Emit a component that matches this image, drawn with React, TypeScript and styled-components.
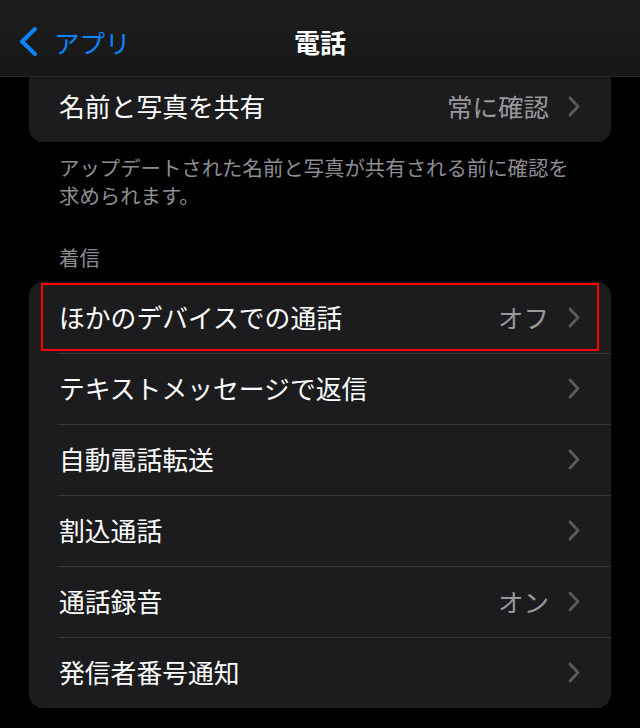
import React from "react";
import styled, { createGlobalStyle } from "styled-components";

const GlobalStyle = createGlobalStyle`
  html, body {
    margin: 0;
    padding: 0;
    background: #000;
  }
  body {
    font-family: "Noto Sans CJK JP", "Noto Sans", sans-serif;
    -webkit-font-smoothing: antialiased;
  }
`;

const Screen = styled.div`
  width: 640px;
  height: 728px;
  overflow: hidden;
  background: #000;
  display: flex;
  flex-direction: column;
`;

const NavBar = styled.div`
  position: relative;
  z-index: 2;
  flex: 0 0 auto;
  height: 77px;
  box-sizing: border-box;
  padding-top: 6px;
  display: flex;
  align-items: center;
  justify-content: center;
  background: linear-gradient(#1d1d1d, #171717);
  border-bottom: 1px solid #262626;
`;

const BackButton = styled.a`
  position: absolute;
  left: 18px;
  top: 6px;
  bottom: 0;
  display: flex;
  align-items: center;
  gap: 16px;
  color: #0a84ff;
  font-size: 25.5px;
  text-decoration: none;
`;

const NavTitle = styled.div`
  color: #fff;
  font-size: 26px;
  font-weight: 700;
`;

const Content = styled.div`
  flex: 1;
  display: flex;
  flex-direction: column;
  padding: 0 29px;
`;

const Card = styled.div<{ $cut?: boolean }>`
  background: #1c1c1e;
  border-radius: ${(p) => (p.$cut ? "0 0 14px 14px" : "14px")};
  margin-top: ${(p) => (p.$cut ? "-6px" : "0")};
  overflow: hidden;
`;

const Row = styled.div<{ $divider?: boolean }>`
  position: relative;
  height: 71px;
  display: flex;
  align-items: center;
  padding: 0 31px 0 30px;
  &::before {
    content: "";
    display: ${(p) => (p.$divider ? "block" : "none")};
    position: absolute;
    left: 29px;
    right: 0;
    top: 0;
    height: 1px;
    background: #38383a;
  }
`;

const Label = styled.span`
  flex: 1;
  color: #fff;
  font-size: 25.8px;
  line-height: 1;
  padding-bottom: 2px;
`;

const Value = styled.span`
  color: #98989d;
  font-size: 25.5px;
  line-height: 1;
  margin-right: 19px;
  padding-bottom: 2px;
`;

const Highlight = styled.div`
  position: absolute;
  left: 12px;
  right: 12px;
  top: 1px;
  bottom: 2px;
  border: 2.5px solid #ff0000;
  pointer-events: none;
`;

const Footer = styled.p`
  margin: 0;
  padding: 11px 30px 0;
  color: #8e8e93;
  font-size: 20.4px;
  line-height: 28px;
`;

const SectionHeader = styled.div`
  margin: 34px 0 11px;
  padding: 0 30px;
  color: #8e8e93;
  font-size: 20.4px;
  line-height: 28px;
`;

const Chevron = () => (
  <svg width="12" height="21" viewBox="0 0 12 21" fill="none">
    <path
      d="M2 2l8 8.5L2 19"
      stroke="#5b5b5f"
      strokeWidth="2.8"
      strokeLinecap="round"
      strokeLinejoin="round"
    />
  </svg>
);

const BackChevron = () => (
  <svg width="20" height="31" viewBox="0 0 20 31" fill="none">
    <path
      d="M17 3L4 15.5 17 28"
      stroke="#0a84ff"
      strokeWidth="4"
      strokeLinecap="round"
      strokeLinejoin="round"
    />
  </svg>
);

type Item = { label: string; value?: string; marked?: boolean };

const incoming: Item[] = [
  { label: "ほかのデバイスでの通話", value: "オフ", marked: true },
  { label: "テキストメッセージで返信" },
  { label: "自動電話転送" },
  { label: "割込通話" },
  { label: "通話録音", value: "オン" },
  { label: "発信者番号通知" },
];

export default function App() {
  return (
    <Screen>
      <GlobalStyle />
      <NavBar>
        <BackButton href="#">
          <BackChevron />
          アプリ
        </BackButton>
        <NavTitle>電話</NavTitle>
      </NavBar>
      <Content>
        <Card $cut>
          <Row>
            <Label>名前と写真を共有</Label>
            <Value>常に確認</Value>
            <Chevron />
          </Row>
        </Card>
        <Footer>
          アップデートされた名前と写真が共有される前に確認を
          <br />
          求められます。
        </Footer>
        <SectionHeader>着信</SectionHeader>
        <Card>
          {incoming.map((item, i) => (
            <Row key={item.label} $divider={i > 0}>
              <Label>{item.label}</Label>
              {item.value && <Value>{item.value}</Value>}
              <Chevron />
              {item.marked && <Highlight />}
            </Row>
          ))}
        </Card>
      </Content>
    </Screen>
  );
}
